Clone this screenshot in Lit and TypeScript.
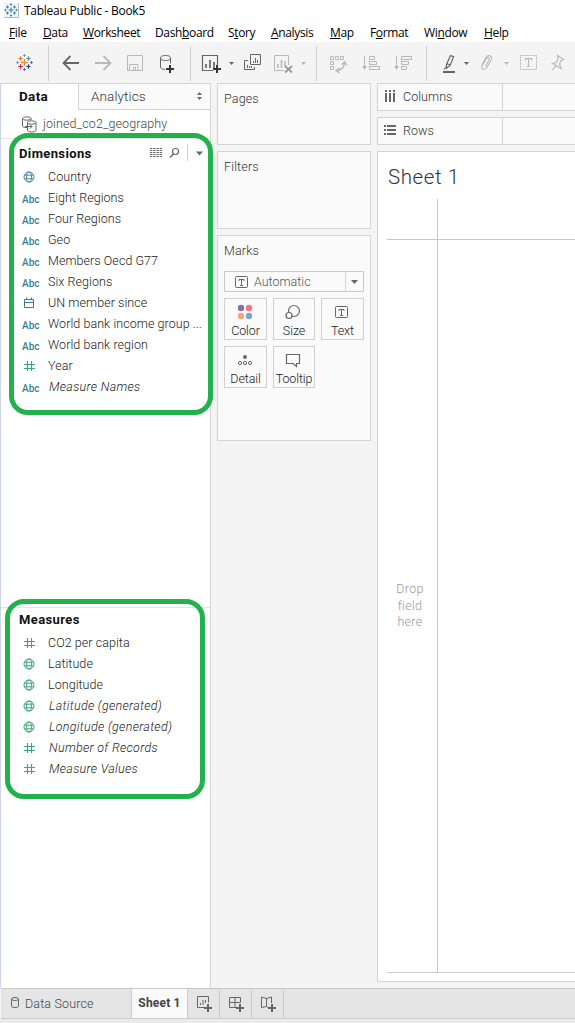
import { LitElement, html, svg, css } from "lit";
import { customElement } from "lit/decorators.js";

// Each icon's viewBox uses window coordinates, so neighbouring glyphs share one grid.
const ico = (x: number, y: number, w: number, h: number, body: unknown) =>
  html`<svg width=${w} height=${h} viewBox="${x} ${y} ${w} ${h}" fill="none">${body}</svg>`;
const bar = (x: number, w: number, body: unknown) => ico(x, 42, w, 41, body);
const plus = (x: number, y: number, r: number, c: string, t = 2) =>
  svg`<path d="M${x - r} ${y}H${x + r}M${x} ${y - r}V${y + r}" stroke=${c} stroke-width=${t}/>`;
const caret = (x: number, y: number, c: string) =>
  svg`<path d="M${x - 2.5} ${y}h5l-2.5 3z" fill=${c}/>`;
const sep = html`<div class="sep"></div>`;
const D = "#666", L = "#b8b8b8";

const globe = (c: string) => html`<svg width="12" height="12" viewBox="0 0 12 12" fill="none" stroke=${c} stroke-width="1">
  <circle cx="6" cy="6" r="5"/><ellipse cx="6" cy="6" rx="2.4" ry="5"/><path d="M1.6 4.2h8.8M1.6 7.8h8.8"/></svg>`;
const hash = (c: string) => html`<svg width="12" height="12" viewBox="0 0 12 12" fill="none" stroke=${c} stroke-width="1.2">
  <path d="M4.5 1v10M8.5 1v10M1 4.5h11M1 8.5h11"/></svg>`;
const cal = html`<svg width="12" height="12" viewBox="0 0 12 12" fill="none" stroke="#3b7d94" stroke-width="1">
  <path d="M1.5 2.5h9v8h-9zM1.5 5.5h9M3.5 .5v2.500M8.500 .5v2.500"/></svg>`;
const abc = html`<span class="abc">Abc</span>`;
const BL = "#4a86a0", GR = "#3fa57c";

type Row = [unknown, string, boolean?];
const dims: Row[] = [
  [globe(BL), "Country"], [abc, "Eight Regions"], [abc, "Four Regions"], [abc, "Geo"],
  [abc, "Members Oecd G77"], [abc, "Six Regions"], [cal, "UN member since"],
  [abc, "World bank income group ..."], [abc, "World bank region"], [hash(GR), "Year"],
  [abc, "Measure Names", true],
];
const meas: Row[] = [
  [hash(GR), "CO2 per capita"], [globe(GR), "Latitude"], [globe(GR), "Longitude"],
  [globe(GR), "Latitude (generated)", true], [globe(GR), "Longitude (generated)", true],
  [hash(GR), "Number of Records", true], [hash(GR), "Measure Values", true],
];
const rows = (list: Row[]) => list.map(r => html`<div class="row"><span class="ic">${r[0]}</span><span class=${r[2] ? "it" : "nm"}>${r[1]}</span></div>`);

const menus: [string, string, string, number][] = [
  ["", "F", "ile", 34], ["", "D", "ata", 40], ["", "W", "orksheet", 72], ["Dash", "b", "oard", 73],
  ["S", "t", "ory", 43], ["", "A", "nalysis", 59], ["", "M", "ap", 40], ["F", "o", "rmat", 54],
  ["Wi", "n", "dow", 60], ["", "H", "elp", 40],
];

const tee = (x: number, y: number, c: string) =>
  svg`<path d="M${x - 2.5} ${y - 1.5}v-1.500h5v1.500M${x} ${y - 3}v6M${x - 1.500} ${y + 3}h3" stroke=${c} stroke-width="1"/>`;

@customElement("app-root")
export class AppRoot extends LitElement {
  static styles = css`
    :host { display: block; position: relative; width: 575px; height: 1023px; overflow: hidden; background: #f4f4f4; color: #333;
      font-family: Roboto, Inter, sans-serif; font-size: 12.500px; font-weight: 300; letter-spacing: .15px; }
    * { box-sizing: border-box; }
    svg { display: block; flex: none; }
    .title { height: 21px; background: #fff; display: flex; align-items: center; padding-left: 4px; gap: 5px; color: #000;
      font: 12px "Open Sans", "Noto Sans", sans-serif; letter-spacing: -.26px; }
    .menu { height: 21px; background: #fff; display: flex; align-items: center; padding: 3px 0 0 9px; color: #000;
      font: 12px/18px "Open Sans", "Noto Sans", sans-serif; letter-spacing: -.35px; }
    .menu div { flex: none; white-space: nowrap; }
    .menu u { text-underline-offset: 1px; text-decoration-skip-ink: none; }
    .toolbar { height: 41px; display: flex; padding-left: 1px; }
    .sep { width: 1px; height: 35px; margin-top: 4px; background: #d0d0d0; flex: none; }
    .main { display: flex; height: 905px; }
    .side { width: 211px; background: #fff; border-left: 1px solid #cbd5e6; border-right: 1px solid #d4d4d4; display: flex; flex-direction: column; flex: none; }
    .tabs { display: flex; height: 27px; flex: none; }
    .tabs .on { width: 77px; padding-left: 18px; border-top: 1px solid #d4d4d4; font-weight: 700; font-size: 13.500px; line-height: 25px; color: #111; letter-spacing: .35px; }
    .tabs .off { flex: 1; background: #fafafa; border: 1px solid #d4d4d4; border-right: 0; padding: 0 8px 2px 12px; display: flex; justify-content: space-between; align-items: center; font-size: 13.500px; letter-spacing: .1px; }
    .src { height: 29px; flex: none; display: flex; align-items: center; padding: 0 0 0 21px; gap: 6px; color: #444; letter-spacing: .12px; border-bottom: 1px solid #e4e4e4; }
    .src span { padding-bottom: 2px; }
    .head { height: 28px; flex: none; padding-left: 18px; display: flex; align-items: center; color: #111; font-weight: 700; font-size: 13px; letter-spacing: .38px; }
    .head svg { margin-left: auto; }
    .list { flex: none; }
    .row { height: 21px; display: flex; align-items: center; white-space: nowrap; color: #222; }
    .ic { width: 47px; padding-left: 22px; flex: none; }
    .ic svg { margin-bottom: 1px; }
    .abc { color: #3b7d94; font-size: 10px; font-weight: 500; letter-spacing: 0; margin-left: -1px; }
    .it, .nm { padding-bottom: 2px; }
    .nm { letter-spacing: .06px; }
    .it { font-style: italic; letter-spacing: .3px; padding-left: 1px; }
    .measures { margin-top: 209px; border-top: 1px solid #e4e4e4; }
    .measures .head { height: 25px; padding-bottom: 2px; }
    .cards { width: 154px; margin-left: 6px; display: flex; flex-direction: column; gap: 6px; flex: none; }
    .card { border: 1px solid #d4d4d4; background: #fafafa; padding: 7px 6px; line-height: 15px; color: #333; }
    .pages { height: 62px; }
    .filters { height: 78px; }
    .marks { height: 206px; }
    .select { margin-top: 13px; height: 21px; border: 1px solid #c8c8c8; border-radius: 1px; display: flex; align-items: center; color: #555; }
    .select svg { margin-left: 10px; }
    .select span { margin-left: 6px; flex: 1; letter-spacing: 0; }
    .select .drop { width: 18px; height: 19px; border-left: 1px solid #d8d8d8; display: grid; place-items: center; }
    .select .drop svg { margin: 0; }
    .grid { display: grid; grid-template-columns: 43px 42px 43px; gap: 6px; margin-top: 6px; }
    .btn { height: 42px; border: 1px solid #d0d0d0; color: #222; display: flex; flex-direction: column; align-items: center; white-space: nowrap; line-height: 14px; letter-spacing: -.1px; }
    .btn svg { margin-left: -2px; }
    .right { flex: 1; margin-left: 6px; display: flex; flex-direction: column; gap: 6px; min-width: 0; }
    .shelf { height: 28px; border: 1px solid #d4d4d4; border-right: 0; background: #fafafa; display: flex; flex: none; color: #333; }
    .shelf div { width: 125px; border-right: 1px solid #d4d4d4; display: flex; align-items: center; letter-spacing: .05px; }
    .shelf span { padding-bottom: 2px; }
    .sheet { height: 831px; border: 1px solid #d4d4d4; border-right: 0; background: #fff; padding-left: 9px; display: flex; flex-direction: column; }
    .sheet h1 { margin: 0; height: 47px; padding: 12px 0 0 1px; font-size: 20.500px; line-height: 26px; font-weight: 300; letter-spacing: .6px; color: #333; }
    .plot { height: 774px; border-bottom: 1px solid #c8c8c8; display: grid; grid-template-columns: 51px 1fr; grid-template-rows: 41px 1fr; }
    .plot div { border-right: 1px solid #c8c8c8; border-bottom: 1px solid #c8c8c8; }
    .plot div:nth-child(even) { border-right: 0; }
    .plot div:nth-child(n + 3) { border-bottom: 0; }
    .plot .drophere { display: flex; align-items: center; justify-content: center; text-align: center; color: #999; line-height: 16.500px; padding: 0 4px 0 0; letter-spacing: .3px; }
    .foot { height: 31px; margin-left: 1px; background: #e5e5e5; border-top: 1px solid #c8c8c8; border-bottom: 1px solid #ccc; display: flex; }
    .foot > div { border-right: 1px solid #ccc; display: flex; align-items: center; }
    .ds { width: 131px; color: #444; }
    .ds span { margin-left: 2px; }
    .cur { width: 56px; background: #fafafa; font-weight: 700; font-size: 12px; justify-content: center; color: #444; letter-spacing: .2px; padding-bottom: 2px; }
    .status { height: 4px; background: #eaeaea; }
    .mark { position: absolute; border: 5px solid #22b14c; border-radius: 19px; }
    .m1 { left: 9px; top: 133px; width: 204px; height: 282px; }
    .m2 { left: 5px; top: 599px; width: 200px; height: 200px; }
  `;

  render() {
    return html`
      <div class="title">
        ${ico(4, 3, 15, 15, svg`<rect x="4" y="3" width="15" height="15" fill="#f3f3f3"/><path d="M18.500 3v14.500H4" stroke="#bbb"/>
          ${plus(11, 10, 2.5, "#3b82ad", 1.2)}${plus(7.5, 7, 1.500, "#3b82ad", 1)}${plus(14.5, 7, 1.500, "#3b82ad", 1)}${plus(7.5, 13, 1.500, "#3b82ad", 1)}${plus(14.500, 13, 1.500, "#3b82ad", 1)}
          ${plus(11, 4.500, 1.200, "#3b82ad", .9)}${plus(11, 15.500, 1.200, "#3b82ad", .9)}${plus(5.500, 10, 1.200, "#3b82ad", .9)}${plus(16.500, 10, 1.200, "#3b82ad", .9)}`)}
        <span>Tableau Public - Book5</span>
      </div>
      <div class="menu">${menus.map(m => html`<div style="width:${m[3]}px">${m[0]}<u>${m[1]}</u>${m[2]}</div>`)}</div>
      <div class="toolbar">
        ${bar(1, 47, svg`${plus(24.5, 62.5, 3.500, "#eb912c", 1.4)}${plus(20.5, 58.500, 2.200, "#e8762d", 1.2)}${plus(28.5, 58.500, 2.200, "#5b879b", 1.2)}
          ${plus(20.5, 66.500, 2.200, "#c72035", 1.2)}${plus(28.5, 66.500, 2.200, "#1f457e", 1.2)}${plus(24.5, 55.500, 1.500, "#7199a6", .9)}
          ${plus(24.5, 69.500, 1.500, "#5c6692", .9)}${plus(17.500, 62.500, 1.500, "#7199a6", .9)}${plus(31.500, 62.500, 1.500, "#5c6692", .9)}`)}${sep}
        ${bar(49, 38, svg`<path d="M79 63H64M70.500 56l-7 7 7 7" stroke=${D} stroke-width="1.800"/>`)}
        ${bar(87, 32, svg`<path d="M95 63h15M103.500 56l7 7-7 7" stroke=${L} stroke-width="1.800"/>`)}
        ${bar(119, 32, svg`<path d="M127.500 55.500h15v15h-15zM129.500 70v-5.500h8.500V70M133.500 70v-2.500h2V70" stroke=${L}/>`)}
        ${bar(151, 39, svg`<ellipse cx="165.500" cy="58" rx="5" ry="2.500" stroke=${D}/><path d="M160.500 58v9c0 1.500 2 2.500 4.500 2.500M170.500 58v5.500" stroke=${D}/>${plus(170, 69, 4, "#333")}`)}${sep}
        ${bar(191, 35, svg`<path d="M213 70.500h-10.500v-15h15V65" stroke=${D} stroke-width="1.200"/><path d="M206 68v-4M210 68v-8M214 68v-6" stroke=${D} stroke-width="1.700"/>${plus(217, 69, 4, "#333")}`)}
        ${bar(226, 12, caret(231.5, 62, D))}
        ${bar(238, 30, svg`<path d="M250.500 54.500h10v10h-10zM248 60.500h-3.500v9h10V67" stroke=${D}/><path d="M253.500 63v-2M255.500 63v-5M257.500 63v-3M247.500 68v-3M249.500 68v-2M251.500 68v-2" stroke=${D}/>`)}
        ${bar(268, 30, svg`<path d="M284 70.500h-9.500v-15h14V65" stroke=${L}/><path d="M278 68v-4M281.500 68v-8M285 66v-5" stroke=${L} stroke-width="1.600"/><path d="M285 66l7 6.500M292 66l-7 6.500" stroke="#999" stroke-width="1.800"/>`)}
        ${bar(298, 18, caret(303.5, 62, L))}${sep}
        ${bar(317, 35, svg`<path d="M330.500 56.500h3v3h-3zM335.500 56.500h3v3h-3zM340.500 56.500h3v3h-3zM330.500 61.500h3v3h-3zM330.500 66.500h3v3h-3z" stroke=${L}/><path d="M344.500 62q.5 7-7 8.500M342 65l2.500-3.500 2.500 3.500M339.500 68l-3.500 2.500 3.500 2.500" stroke=${L} stroke-width="1.300"/>`)}
        ${bar(352, 36, svg`<path d="M364.500 56v11" stroke=${L}/><path d="M362 66h5l-2.500 4z" fill=${L}/><path d="M369.500 56.500h5v3h-5zM369.500 61.500h7v3h-7zM369.500 66.500h10v3h-10z" stroke=${L}/>`)}
        ${bar(388, 38, svg`<path d="M396.500 56v11" stroke=${L}/><path d="M394 66h5l-2.500 4z" fill=${L}/><path d="M401.500 56.500h10v3h-10zM401.500 61.500h7v3h-7zM401.500 66.500h5v3h-5z" stroke=${L}/>`)}${sep}
        ${bar(427, 33, svg`<path d="M443 72h12" stroke=${D} stroke-width="2"/><path d="M446.500 64.500l4-9 3 1.200-3.500 9-3.500 2.500zM446.500 63.500l3.500 1.500M446 67l-2 2.500" stroke=${D} stroke-width="1.200"/>`)}
        ${bar(460, 14, caret(466.5, 62, D))}
        ${bar(474, 26, svg`<path d="M482 64.500l4-7c2-3.500 7-1.500 5.500 2l-5 8.500c-2 3-6 1-4.500-2l4.500-7.500c1.500-2 3.500-.5 2.500 1.500l-3.500 6.500" stroke=${L} stroke-width="1.100"/>`)}
        ${bar(500, 14, caret(506.5, 62, L))}
        ${bar(514, 31, svg`<rect x="520.500" y="55.500" width="16" height="14" stroke=${L} stroke-dasharray="2 1"/><path d="M525.500 60.500v-2h6v2M528.500 58.500v8M527 66.500h3" stroke=${L} stroke-width="1.200"/>`)}
        ${bar(545, 29, svg`<path d="M557.500 55.500l6 4-2.500 1-1.500 3.500 1.500 4.500-8.500-5 4-1 1.500-4zM556 65.500l-3.500 4.500" stroke=${L} stroke-width="1.200"/>`)}
      </div>
      <div class="main">
        <div class="side">
          <div class="tabs"><div class="on">Data</div><div class="off">Analytics
            <svg width="5" height="8" viewBox="0 0 5 8"><path d="M0 3L2.500 0 5 3zM0 5l2.500 3L5 5z" fill="#667"/></svg></div></div>
          <div class="src">${ico(22, 115, 15, 17, svg`<path d="M27 126.500c-3 0-4.500-.5-4.500-1.500v-7.500M31 117.500v1.500" stroke=${D}/><ellipse cx="26.750" cy="117.500" rx="4.250" ry="1.700" stroke=${D}/><ellipse cx="31.750" cy="121.500" rx="4.250" ry="1.700" stroke=${D}/><path d="M27.500 121.500v8q1 1.500 4.250 1.500t4.250-1.500v-8M25 125.500h7M30 123.500l2 2-2 2" stroke=${D}/>`)}<span>joined_co2_geography</span></div>
          <div class="head">Dimensions
            ${ico(149, 140, 61, 26, svg`<path d="M150 148.500h12M150 150.500h12M150 152.500h12M150 154.500h12M150 156.500h12" stroke=${D} stroke-dasharray="2.300 .93"/><circle cx="175.500" cy="151.500" r="3" stroke=${D} stroke-width="1.200"/><path d="M173.500 154l-3.500 3.500" stroke=${D} stroke-width="1.500"/><path d="M187.500 144v17" stroke="#ccc"/><path d="M196 151.500h7l-3.500 4z" fill=${D}/>`)}</div>
          <div class="list">${rows(dims)}</div>
          <div class="measures"><div class="head">Measures</div>${rows(meas)}</div>
        </div>
        <div class="cards">
          <div class="card pages">Pages</div>
          <div class="card filters">Filters</div>
          <div class="card marks">Marks
            <div class="select">${ico(235, 275, 13, 12, svg`<rect x="235.500" y="275.500" width="12" height="11" rx="1" stroke=${D}/>${tee(241.5, 281.5, D)}`)}<span>Automatic</span>
              <div class="drop">${ico(0, 0, 7, 4, svg`<path d="M0 0h7L3.500 4z" fill=${D}/>`)}</div></div>
            <div class="grid">
              <div class="btn">${ico(235, 299, 20, 25, svg`<circle cx="241" cy="308" r="3.200" fill="#8a6f9c"/><circle cx="249" cy="308" r="3.200" fill="#fb7184"/><circle cx="241" cy="316" r="3.200" fill="#f5a579"/><circle cx="249" cy="316" r="3.200" fill="#7fa5ce"/>`)}Color</div>
              <div class="btn">${ico(284, 299, 20, 25, svg`<circle cx="295" cy="311" r="5.500" stroke=${D} stroke-width="1.200"/><circle cx="290" cy="315.500" r="3" fill="#fafafa" stroke=${D} stroke-width="1.200"/>`)}Size</div>
              <div class="btn">${ico(332, 299, 20, 25, svg`<rect x="335.500" y="306.500" width="12" height="11" rx="1" stroke=${D}/>${tee(341.5, 312.5, D)}`)}Text</div>
              <div class="btn">${ico(235, 347, 20, 25, svg`<circle cx="245" cy="357" r="2" fill=${D}/><g stroke=${D}><circle cx="240" cy="363" r="1.600"/><circle cx="245" cy="363" r="1.600"/><circle cx="250" cy="363" r="1.600"/></g>`)}Detail</div>
              <div class="btn">${ico(284, 347, 20, 25, svg`<path d="M287.500 354.500h13v9h-3v3l-3.500-3h-6.500z" stroke=${D} stroke-width="1.200"/>`)}Tooltip</div>
            </div>
          </div>
        </div>
        <div class="right">
          <div class="shelf"><div>${ico(378, 84, 25, 26, svg`<path d="M386 90v2M390 90v2M394 90v2M386 93v9M390 93v9M394 93v9" stroke=${D} stroke-width="2"/>`)}<span>Columns</span></div></div>
          <div class="shelf"><div>${ico(378, 118, 25, 26, svg`<path d="M384 126h2M384 130h2M384 134h2M387 126h9M387 130h9M387 134h9" stroke=${D} stroke-width="2"/>`)}<span>Rows</span></div></div>
          <div class="sheet"><h1>Sheet 1</h1>
            <div class="plot"><div></div><div></div><div class="drophere">Drop<br>field<br>here</div><div></div></div>
          </div>
        </div>
      </div>
      <div class="foot">
        <div class="ds">${ico(1, 989, 22, 29, svg`<ellipse cx="15" cy="999" rx="3.500" ry="1.500" stroke=${D}/><path d="M11.500 999v7.500q.5 1 3.500 1t3.500-1V999" stroke=${D}/>`)}<span>Data Source</span></div>
        <div class="cur">Sheet 1</div>
        <div>${ico(188, 989, 31, 29, svg`<path d="M204 1007.500h-6.500v-11h11v6" stroke=${D}/><path d="M200.500 1005v-2M203 1005v-5M205.500 1003v-3" stroke=${D}/>${plus(208, 1008, 4, D)}`)}</div>
        <div>${ico(220, 989, 31, 29, svg`<path d="M236 1007.500h-6.500v-10h11v5M229.500 1002.500h11M235 997.500v10" stroke=${D}/>${plus(240, 1008, 4, D)}`)}</div>
        <div>${ico(252, 989, 31, 29, svg`<path d="M268 1007.500l-1.500-1-5 1v-10.500l5 1.500v8M266.500 998.500l5-1.500v6" stroke=${D}/>${plus(272, 1008, 4, D)}`)}</div>
      </div>
      <div class="status"></div>
      <div class="mark m1"></div>
      <div class="mark m2"></div>
    `;
  }
}
